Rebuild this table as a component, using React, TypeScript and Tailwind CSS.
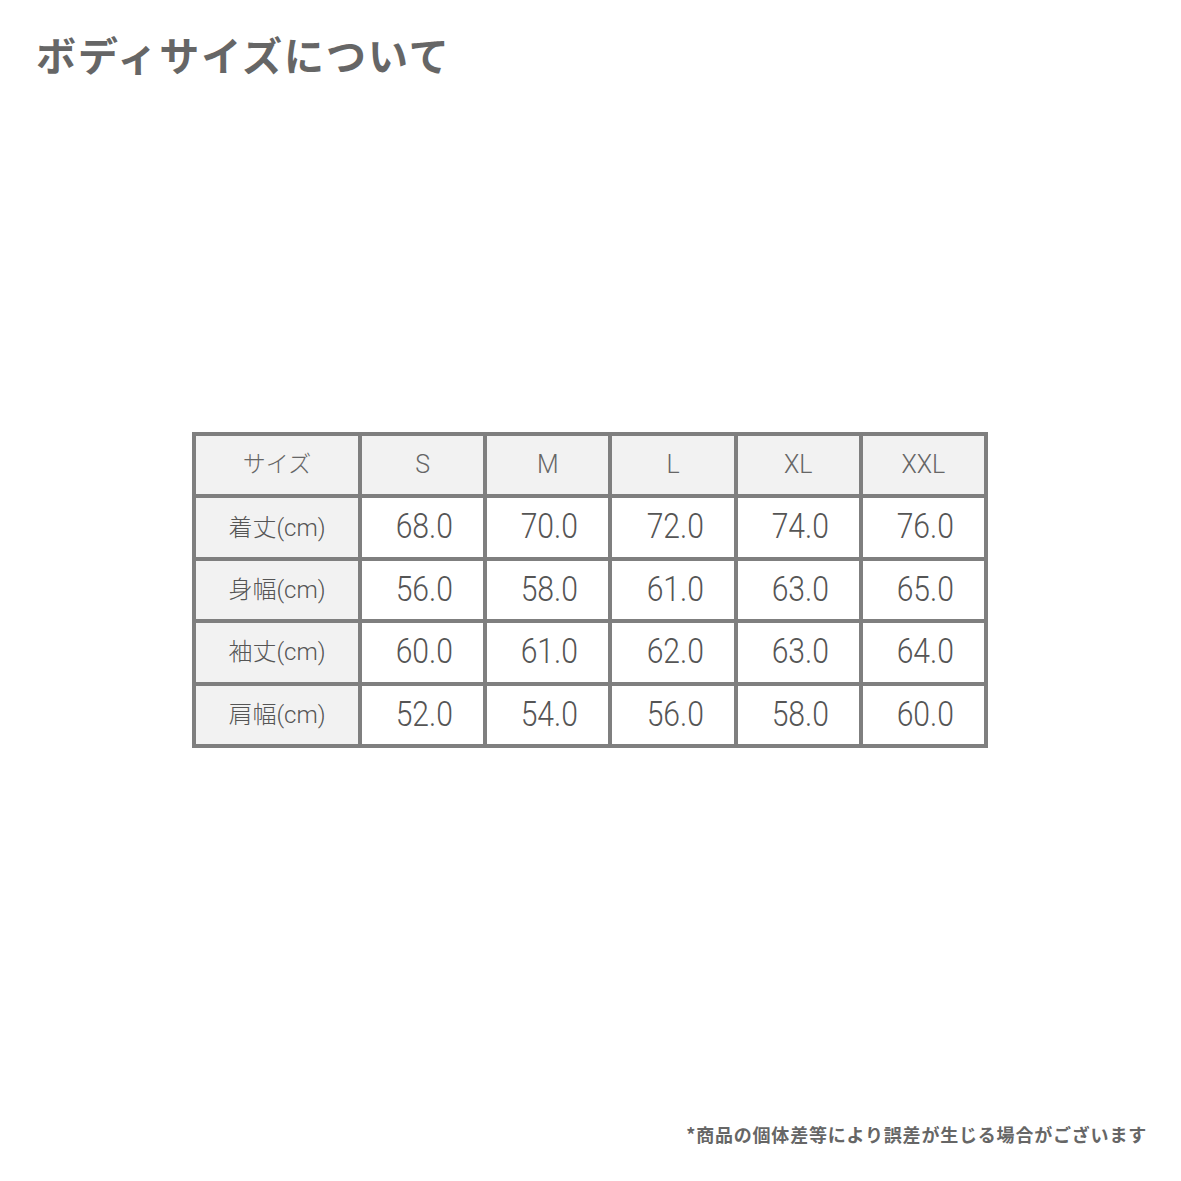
import { Fragment } from 'react'

const sizes = ['S', 'M', 'L', 'XL', 'XXL']

const rows = [
  { label: '着丈(cm)', values: ['68.0', '70.0', '72.0', '74.0', '76.0'] },
  { label: '身幅(cm)', values: ['56.0', '58.0', '61.0', '63.0', '65.0'] },
  { label: '袖丈(cm)', values: ['60.0', '61.0', '62.0', '63.0', '64.0'] },
  { label: '肩幅(cm)', values: ['52.0', '54.0', '56.0', '58.0', '60.0'] },
]

const font = "font-['Roboto','Noto_Sans_CJK_JP',sans-serif]"
const cell = 'flex items-center justify-center'

export default function App() {
  return (
    <main className={`w-[1181px] h-[1181px] bg-white overflow-hidden ${font}`}>
      <h1 className="pt-[34px] pl-[36px] text-[40px] leading-none font-bold tracking-[2px] text-[#666] font-['Noto_Sans_CJK_JP',sans-serif]">
        ボディサイズについて
      </h1>

      <div className="ml-[192px] mt-[358px] w-[796px] h-[316px] grid grid-cols-[162px_repeat(5,1fr)] grid-rows-[repeat(5,1fr)] gap-[4px] p-[4px] bg-[#7f7f7f]">
        <div className={`${cell} bg-[#f2f2f2] text-[23px] font-light text-[#666]`}>サイズ</div>
        {sizes.map((s) => (
          <div key={s} className={`${cell} bg-[#f2f2f2] text-[25px] font-light text-[#666]`}>
            {s}
          </div>
        ))}
        {rows.map((row) => (
          <Fragment key={row.label}>
            <div className={`${cell} bg-[#f2f2f2] text-[24px] font-light text-[#555]`}>
              {row.label}
            </div>
            {row.values.map((v, i) => (
              <div key={i} className={`${cell} pl-[4px] bg-white text-[#555]`}>
                <span className="inline-block text-[35px] font-light scale-x-[0.86]">{v}</span>
              </div>
            ))}
          </Fragment>
        ))}
      </div>

      <p className="mt-[377px] pr-[34px] text-right text-[18px] leading-none font-bold tracking-[0.8px] text-[#666] font-['Noto_Sans_CJK_JP',sans-serif]">
        *商品の個体差等により誤差が生じる場合がございます
      </p>
    </main>
  )
}
